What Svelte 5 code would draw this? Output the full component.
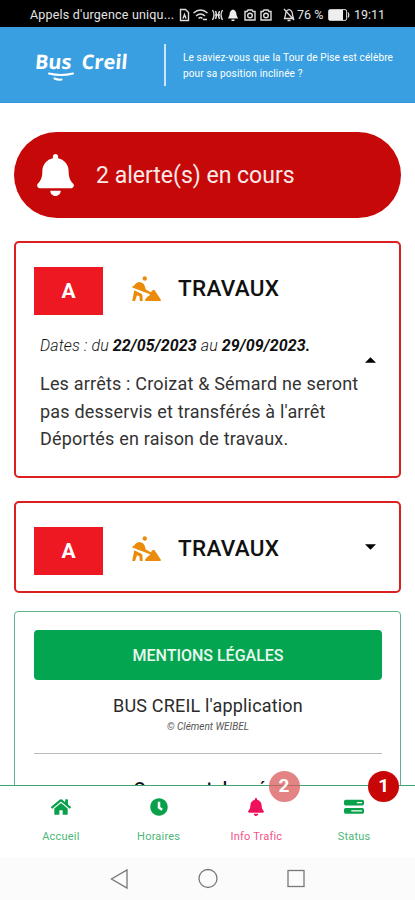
<script lang="ts">
  type Alert = {
    id: number;
    line: string;
    title: string;
    from?: string;
    to?: string;
    text?: string;
    open: boolean;
  };

  let alerts: Alert[] = $state([
    {
      id: 1,
      line: "A",
      title: "TRAVAUX",
      from: "22/05/2023",
      to: "29/09/2023.",
      text: "Les arrêts : Croizat & Sémard ne seront pas desservis et transférés à l'arrêt Déportés en raison de travaux.",
      open: true,
    },
    { id: 2, line: "A", title: "TRAVAUX", open: false },
  ]);

  const BELL =
    "M224 512c35.32 0 63.97-28.65 63.97-64H160.03c0 35.35 28.65 64 63.97 64zm215.39-149.71c-19.32-20.76-55.47-51.99-55.47-154.29 0-77.7-54.48-139.9-127.94-155.16V32c0-17.67-14.32-32-31.98-32s-31.98 14.33-31.98 32v20.84C118.56 68.1 64.08 130.3 64.08 208c0 102.3-36.15 133.53-55.47 154.29-6 6.45-8.66 14.16-8.61 21.71.11 16.4 12.98 32 32.1 32h383.8c19.12 0 32-15.6 32.1-32 .05-7.55-2.61-15.27-8.61-21.71z";
  const HOME =
    "M280.37 148.26L96 300.11V464a16 16 0 0 0 16 16l112.06-.29a16 16 0 0 0 15.92-16V368a16 16 0 0 1 16-16h64a16 16 0 0 1 16 16v95.64a16 16 0 0 0 16 16.05L464 480a16 16 0 0 0 16-16V300L295.67 148.26a12.19 12.19 0 0 0-15.3 0zM571.6 251.47L488 182.56V44.05a12 12 0 0 0-12-12h-56a12 12 0 0 0-12 12v72.61L318.47 43a48 48 0 0 0-61 0L4.34 251.47a12 12 0 0 0-1.6 16.9l25.5 31A12 12 0 0 0 45.15 301l235.22-193.74a12.19 12.19 0 0 1 15.3 0L530.9 301a12 12 0 0 0 16.9-1.6l25.5-31a12 12 0 0 0-1.7-16.93z";
  const CLOCK =
    "M256 8C119 8 8 119 8 256s111 248 248 248 248-111 248-248S393 8 256 8zm57.1 350.1L224.9 294c-3.1-2.3-4.9-5.9-4.9-9.7V116c0-6.6 5.4-12 12-12h48c6.6 0 12 5.4 12 12v137.7l63.5 46.2c5.4 3.9 6.5 11.4 2.6 16.8l-28.2 38.8c-3.9 5.3-11.4 6.5-16.8 2.6z";
  // two stacked bars, each with a slot cut out on the right
  const STATUS =
    "M48 50h480q48 0 48 48v64q0 48-48 48H48q-48 0-48-48V98q0-48 48-48zM370 112v36h150v-36zM48 288h480q48 0 48 48v64q0 48-48 48H48q-48 0-48-48v-64q0-48 48-48zM210 350v36h310v-36z";

  const tabs = [
    { label: "Accueil", icon: HOME, box: "0 0 576 512", badge: 0 },
    { label: "Horaires", icon: CLOCK, box: "0 0 512 512", badge: 0 },
    { label: "Info Trafic", icon: BELL, box: "0 0 448 512", badge: 2 },
    { label: "Status", icon: STATUS, box: "0 0 576 512", badge: 1 },
  ];
  let active = $state("Info Trafic");
</script>

<div class="screen">
  <div class="statusbar">
    <span class="carrier">Appels d'urgence uniqu...</span>
    <svg class="tray" width="93" height="14" viewBox="0 0 93 14">
      <g fill="none" stroke="#ddd" stroke-width="1.4">
        <path d="M1.500 1.500h5l3 3v8h-8zM4 10.500l1.500-4 1.500 4" />
        <path d="M14.500 5q7-6 14 0M17 8q4.500-4 9 0M19.500 10.500q2-2 4 0M24 11.500h4" />
        <path d="M33.500 2q3 5 0 10M43.500 2q-3 5 0 10M36.500 3q2 4 0 8M40.500 3q-2 4 0 8M36 7h5" />
        <path d="M66 3.500h2l1-1.500h4l1 1.500h2v8.500H66zM82 3.500h2l1-1.500h4l1 1.500h2v8.500H82z" />
        <circle cx="71" cy="7.500" r="2.300" />
        <circle cx="87" cy="7.500" r="2.300" />
      </g>
      <path d="M54 1.500q3.500 1 3.500 5.500l1.500 3.500H49l1.500-3.500q0-4.500 3.500-5.500zM52.500 11.500h3v1.500h-3z" fill="#eee" />
    </svg>
    <svg class="mute" width="12" height="14" viewBox="0 0 12 14">
      <path d="M6 1.500q3.500 1 3.500 5.500l1 3.500h-9l1-3.500q0-4.500 3.500-5.500zM1 1l10 11M4.500 12.500h3" fill="none" stroke="#ddd" stroke-width="1.300" />
    </svg>
    <span class="pct">76 %</span>
    <svg class="battery" width="22" height="12" viewBox="0 0 22 12">
      <rect x=".6" y=".6" width="18" height="10.800" rx="1.500" fill="none" stroke="#ddd" />
      <rect x="1" y="1" width="14" height="10" fill="#eee" />
      <path d="M20 3.500q1.500 2.500 0 5" fill="none" stroke="#ddd" stroke-width="1.300" />
    </svg>
    <span class="clock">19:11</span>
  </div>

  <header>
    <div class="logo">
      <span>Bus Creil</span>
      <svg width="26" height="10" viewBox="0 0 26 10" fill="none" stroke="#fff" stroke-width="2" stroke-linecap="round">
        <path d="M1 1.500q12 3 24 0M6.500 6.500q4 1.800 7 1" />
      </svg>
    </div>
    <p class="tip">Le saviez-vous que la Tour de Pise est célèbre<br />pour sa position inclinée ?</p>
  </header>

  <main>
    <div class="banner">
      <svg width="37" height="42" viewBox="0 0 448 512" fill="#fff"><path d={BELL} /></svg>
      <span>{alerts.length} alerte(s) en cours</span>
    </div>

    {#each alerts as alert (alert.id)}
      <section class="alert" class:open={alert.open}>
        <div class="body">
          <div class="head">
            <span class="line">{alert.line}</span>
            <svg class="works" width="30" height="26" viewBox="0 0 30 26" fill="#ea8c0a">
              <circle cx="12.800" cy="2.500" r="2.200" />
              <path d="M.5 10.300L2 9.700Q5 5.500 8.500 6.200q3 .3 4 3l1.300 4.300 5 2.700 1.700-2q1.300-1 2.300.3l6.100 9.300q.3 1.200-.9 1.200H14q-1.500-.1-.8-1.500l1.800-2.200q1-1.300 2.300-1.500l.7-1.500L.3 11.500z" />
              <path d="M2.300 14.300l7 3.400q1 .6 1.100 1.600l.3 5.700H7.900l-.5-4.700-2.400-1L3 25H.2z" />
            </svg>
            <h2>{alert.title}</h2>
          </div>
          {#if alert.open}
            <p class="dates">Dates : du <b>{alert.from}</b> au <b>{alert.to}</b></p>
            <p class="text">{alert.text}</p>
          {/if}
        </div>
        <button class="toggle" aria-label="Détails" onclick={() => (alert.open = !alert.open)}>
          <svg width="11" height="6" viewBox="0 0 12 6"><path d={alert.open ? "M0 6l6-6 6 6z" : "M0 0h12L6 6z"} /></svg>
        </button>
      </section>
    {/each}

    <section class="legal">
      <button class="legal-btn">MENTIONS LÉGALES</button>
      <p class="app">BUS CREIL l'application</p>
      <p class="copy">© Clément WEIBEL</p>
      <hr />
      <h3>Comment de créer</h3>
    </section>
  </main>

  <nav class="tabs">
    {#each tabs as tab (tab.label)}
      <button class="tab" class:active={active === tab.label} onclick={() => (active = tab.label)}>
        <svg width="20" height="18" viewBox={tab.box} fill="currentColor" fill-rule="evenodd"><path d={tab.icon} /></svg>
        <span>{tab.label}</span>
        {#if tab.badge}
          <b class="badge" class:faded={active === tab.label}>{tab.badge}</b>
        {/if}
      </button>
    {/each}
  </nav>

  <div class="sysnav">
    <svg width="200" height="24" viewBox="0 0 200 24" fill="none" stroke="#777" stroke-width="1.300">
      <path d="M19 3v18L3.500 12z" />
      <circle cx="100" cy="11.500" r="9" />
      <rect x="180" y="3.500" width="16" height="16" />
    </svg>
  </div>
</div>

<style>
  :global(body) { background: #fff; }
  .screen {
    width: 415px;
    height: 900px;
    display: flex;
    flex-direction: column;
    overflow: hidden;
    font-family: Roboto, "Liberation Sans", sans-serif;
    color: #111;
  }
  p, h2, h3 { margin: 0; }
  button { border: 0; padding: 0; background: none; font: inherit; color: inherit; }
  svg { display: block; flex: none; }

  .statusbar {
    height: 27px;
    box-sizing: border-box;
    padding: 2px 0 0 30px;
    display: flex;
    align-items: center;
    background: #000;
    color: #e4e4e4;
    font-size: 12.5px;
    white-space: nowrap;
  }
  .carrier { width: 149px; letter-spacing: 0.2px; }
  .mute { margin: 0 2px 0 11px; }
  .pct { width: 31px; }
  .clock { margin-left: 4px; }

  header {
    height: 76px;
    flex: none;
    box-sizing: border-box;
    display: flex;
    align-items: center;
    background: #3a9fe1;
    border-bottom: 1px solid #3694d6;
    color: #fff;
  }
  .logo {
    width: 129px;
    padding: 3px 0 0 35px;
    font: 700 20px/24px "Open Sans", "DejaVu Sans", sans-serif;
    word-spacing: 5px;
    white-space: nowrap;
  }
  .logo span {
    display: inline-block;
    transform: skewX(-5deg);
  }
  .logo svg { margin: -2px 0 0 13px; }
  .tip {
    border-left: 2px solid #c9e6fa;
    padding: 6px 0 4px 17px;
    font-size: 10px;
    line-height: 16px;
    letter-spacing: 0.15px;
    white-space: nowrap;
  }

  main {
    flex: 1;
    min-height: 0;
    overflow: hidden;
    padding: 29px 14px 0;
  }
  .banner {
    height: 86px;
    box-sizing: border-box;
    padding-left: 23px;
    display: flex;
    align-items: center;
    gap: 22px;
    border-radius: 43px;
    background: #c60808;
    color: #fbe9e9;
    font-size: 23px;
  }
  .alert {
    display: flex;
    align-items: center;
    box-sizing: border-box;
    height: 92px;
    margin-top: 23px;
    padding: 0 23px 0 18px;
    border: 2px solid #dc2020;
    border-radius: 5px;
  }
  .alert.open { height: 237px; }
  .body { flex: 1; padding-top: 7px; }
  .open .body { padding: 1px 0 0; }
  .head { display: flex; align-items: center; height: 48px; }
  .line {
    width: 69px;
    height: 48px;
    display: grid;
    place-items: center;
    background: #ee1822;
    color: #fff;
    font-size: 21px;
    font-weight: 700;
  }
  .works { margin: -4px 16px 0 29px; }
  h2 {
    font-size: 22.5px;
    font-weight: 500;
    line-height: 42px;
    padding-bottom: 6px;
    letter-spacing: 0.3px;
  }
  .dates {
    margin: 19px 0 0 6px;
    font-size: 16px;
    line-height: 24px;
    font-style: italic;
    font-weight: 300;
    letter-spacing: 0.12px;
  }
  .dates b { font-weight: 700; }
  .text {
    margin: 12px -8px 0 6px;
    font-size: 18px;
    line-height: 27.5px;
    letter-spacing: 0.19px;
    color: #333;
    width: 326px;
  }

  .legal {
    margin-top: 18px;
    padding: 18px 18px 0 19px;
    height: 300px;
    border: 1px solid #5bb38a;
    border-radius: 4px;
    text-align: center;
  }
  .legal-btn {
    width: 100%;
    height: 50px;
    border-radius: 4px;
    background: #04a551;
    color: #e9f8ef;
    font-size: 16px;
    font-weight: 500;
  }
  .app {
    margin-top: 14px;
    font-size: 18px;
    line-height: 24px;
    letter-spacing: 0.18px;
    color: #2a2a2a;
  }
  .copy { font-size: 10px; line-height: 18px; font-style: italic; color: #555; }
  hr { margin: 17px 0 0; border: 0; border-top: 1px solid #bbb; }
  h3 { margin-top: 22px; font-size: 18px; font-weight: 500; line-height: 26px; }

  .tabs {
    height: 72px;
    flex: none;
    box-sizing: border-box;
    padding: 0 12px;
    display: grid;
    grid-template-columns: repeat(4, 1fr);
    border-top: 1px solid #3fa673;
    background: #fff;
  }
  .tab {
    position: relative;
    display: flex;
    flex-direction: column;
    align-items: center;
    padding-top: 12px;
    gap: 13px;
    color: #08a04a;
    font-size: 11px;
    line-height: 16px;
  }
  .tab.active { color: #f0115c; }
  .tab span { opacity: 0.75; letter-spacing: 0.2px; }
  .badge {
    position: absolute;
    top: -15px;
    left: 61px;
    width: 31px;
    height: 31px;
    border-radius: 50%;
    background: #c90606;
    color: #fff;
    font-size: 19px;
    line-height: 29px;
  }
  .tab:last-child .badge { left: 63px; }
  .badge.faded { background: rgba(218, 90, 90, 0.75); }

  .sysnav {
    height: 43px;
    flex: none;
    display: grid;
    place-items: center;
    background: #fbfbfb;
  }
</style>
